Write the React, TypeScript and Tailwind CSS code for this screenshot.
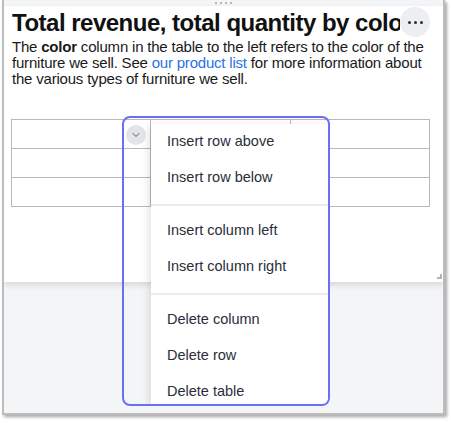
import { ChevronDown } from 'lucide-react';

const menuGroups = [
  ['Insert row above', 'Insert row below'],
  ['Insert column left', 'Insert column right'],
  ['Delete column', 'Delete row', 'Delete table'],
];

export default function App() {
  return (
    <div className="w-[451px] h-[423px] bg-white font-['Liberation_Sans',Arial,sans-serif]">
      {/* Screenshot frame */}
      <div className="relative ml-[2px] w-[443px] h-[415px] border-x-2 border-b-2 border-[#bcbcbc] bg-[#f4f5f7] shadow-[2px_2px_3px_rgba(0,0,0,0.35)] overflow-hidden">
        {/* Drag handle strip */}
        <div className="h-[6px] flex justify-center gap-[3px] pt-[2px]">
          {[0, 1, 2, 3].map((i) => (
            <span key={i} className="w-[2px] h-[2px] rounded-full bg-[#a0a3aa]" />
          ))}
        </div>

        {/* Card */}
        <div className="relative h-[276px] bg-white px-[8px] pt-[2px] shadow-[0_3px_6px_rgba(0,0,0,0.12)]">
          <div className="w-[388px] overflow-hidden whitespace-nowrap text-[24px] leading-[29px] font-bold tracking-[-0.5px] text-[#111]">
            Total revenue, total quantity by color
          </div>
          <button className="absolute left-[396px] top-[1px] w-[30px] h-[30px] rounded-full bg-[#eceef1] flex items-center justify-center gap-[3px]">
            <span className="w-[3px] h-[3px] rounded-full bg-[#2b2e36]" />
            <span className="w-[3px] h-[3px] rounded-full bg-[#2b2e36]" />
            <span className="w-[3px] h-[3px] rounded-full bg-[#2b2e36]" />
          </button>

          <p className="mt-[2px] text-[15px] leading-[16px] tracking-[-0.2px] text-[#1a1a1a]">
            The <span className="font-bold">color</span> column in the table to the left refers to the color of the
            furniture we sell. See <span className="text-[#2a72e5]">our product list</span> for more information about
            the various types of furniture we sell.
          </p>

          {/* Table */}
          <div className="mt-[32px] -ml-[1px] w-[419px] grid grid-cols-3 border-t border-l border-[#b8b8b8]">
            {Array.from({ length: 9 }).map((_, i) => (
              <div key={i} className="h-[29px] border-r border-b border-[#b8b8b8]" />
            ))}
          </div>

          {/* Resize handle */}
          <svg className="absolute right-[1px] bottom-[3px]" width="5" height="5" viewBox="0 0 5 5">
            <path d="M4 0 V4 H0" stroke="#9a9ca2" strokeWidth="1.5" fill="none" />
          </svg>
        </div>

        {/* Table context menu with focus outline */}
        <div className="absolute left-[118px] top-[116px] w-[208px] h-[290px] rounded-lg border-2 border-[#6b6ff7] overflow-hidden flex">
          <div className="w-[27px] shrink-0 pt-[7px] pl-[2px]">
            <div className="w-[20px] h-[20px] rounded-full bg-[#e3e4e9] flex items-center justify-center">
              <ChevronDown size={12} strokeWidth={2} color="#555a66" />
            </div>
          </div>
          <div className="flex-1 mt-[6px] bg-white shadow-[-2px_2px_8px_rgba(0,0,0,0.12)] overflow-hidden">
            {menuGroups.map((group, gi) => (
              <div key={gi}>
                {gi > 0 && <div className="mt-2 mb-[7px] h-[2px] bg-[#ebecf0]" />}
                {group.map((label) => (
                  <div key={label} className="h-9 flex items-center pl-[16px] text-[14.5px] text-[#2a2e3b]">
                    {label}
                  </div>
                ))}
              </div>
            ))}
          </div>
        </div>
      </div>
    </div>
  );
}
